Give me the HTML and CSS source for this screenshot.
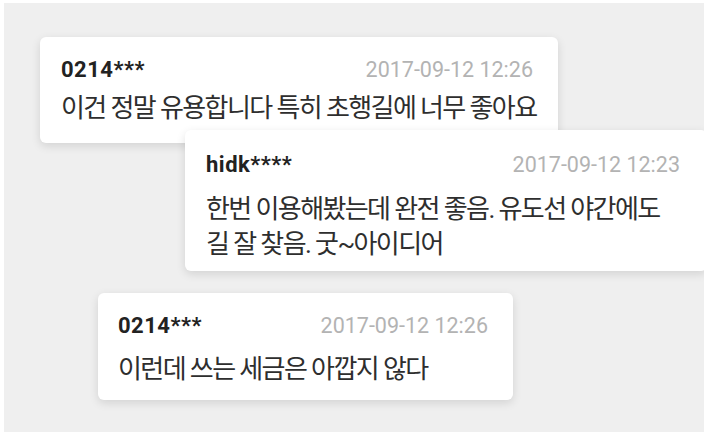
FILE: index.html
```html
<!DOCTYPE html>
<html lang="ko">
<head>
    <meta charset="UTF-8">
    <title>댓글</title>
    <link rel="stylesheet" href="styles.css">
</head>
<body>
    <div class="panel">
        <div class="comment comment-first">
            <div class="comment-head">
                <span class="comment-user">0214***</span>
                <span class="comment-date">2017-09-12 12:26</span>
            </div>
            <p class="comment-text">이건 정말 유용합니다 특히 초행길에 너무 좋아요</p>
        </div>

        <div class="comment comment-second">
            <div class="comment-head">
                <span class="comment-user">hidk****</span>
                <span class="comment-date">2017-09-12 12:23</span>
            </div>
            <p class="comment-text">한번 이용해봤는데 완전 좋음. 유도선 야간에도<br>길 잘 찾음. 굿~아이디어</p>
        </div>

        <div class="comment comment-third">
            <div class="comment-head">
                <span class="comment-user">0214***</span>
                <span class="comment-date">2017-09-12 12:26</span>
            </div>
            <p class="comment-text">이런데 쓰는 세금은 아깝지 않다</p>
        </div>
    </div>
</body>
</html>
```

FILE: styles.css
```css
body {
    margin: 0;
    background-color: #fff;
    font-family: Roboto, "Noto Sans CJK KR", sans-serif;
}

.panel {
    margin: 3px 4px 0;
    height: 429px;
    background-color: #efefef;
    overflow: hidden;
    padding-top: 1px;
    box-sizing: border-box;
}

.comment {
    position: relative;
    background-color: #fff;
    border-radius: 6px;
    box-shadow: 0 3px 10px rgba(0, 0, 0, 0.12);
    box-sizing: border-box;
    padding: 20px 25px 0 21px;
}

.comment-first {
    width: 518px;
    height: 106px;
    margin: 33px 0 0 36px;
}

.comment-second {
    width: 522px;
    height: 141px;
    margin: -13px 0 0 181px;
    padding-top: 22px;
    padding-right: 27px;
}

.comment-third {
    width: 415px;
    height: 107px;
    margin: 22px 0 0 94px;
    padding-left: 20px;
}

.comment-head {
    display: flex;
    justify-content: space-between;
    align-items: baseline;
    line-height: 26px;
}

.comment-user {
    font-size: 22px;
    font-weight: bold;
    color: #222;
    letter-spacing: 0.5px;
}

.comment-date {
    font-size: 21.5px;
    color: #b3b3b3;
}

.comment-text {
    margin: 7px 0 0;
    font-size: 26px;
    line-height: 36px;
    letter-spacing: -1.6px;
    white-space: nowrap;
    color: #2e2e2e;
}

.comment-second .comment-text {
    margin-top: 14px;
    line-height: 35px;
}

.comment-third .comment-text {
    margin-top: 12px;
}
```
